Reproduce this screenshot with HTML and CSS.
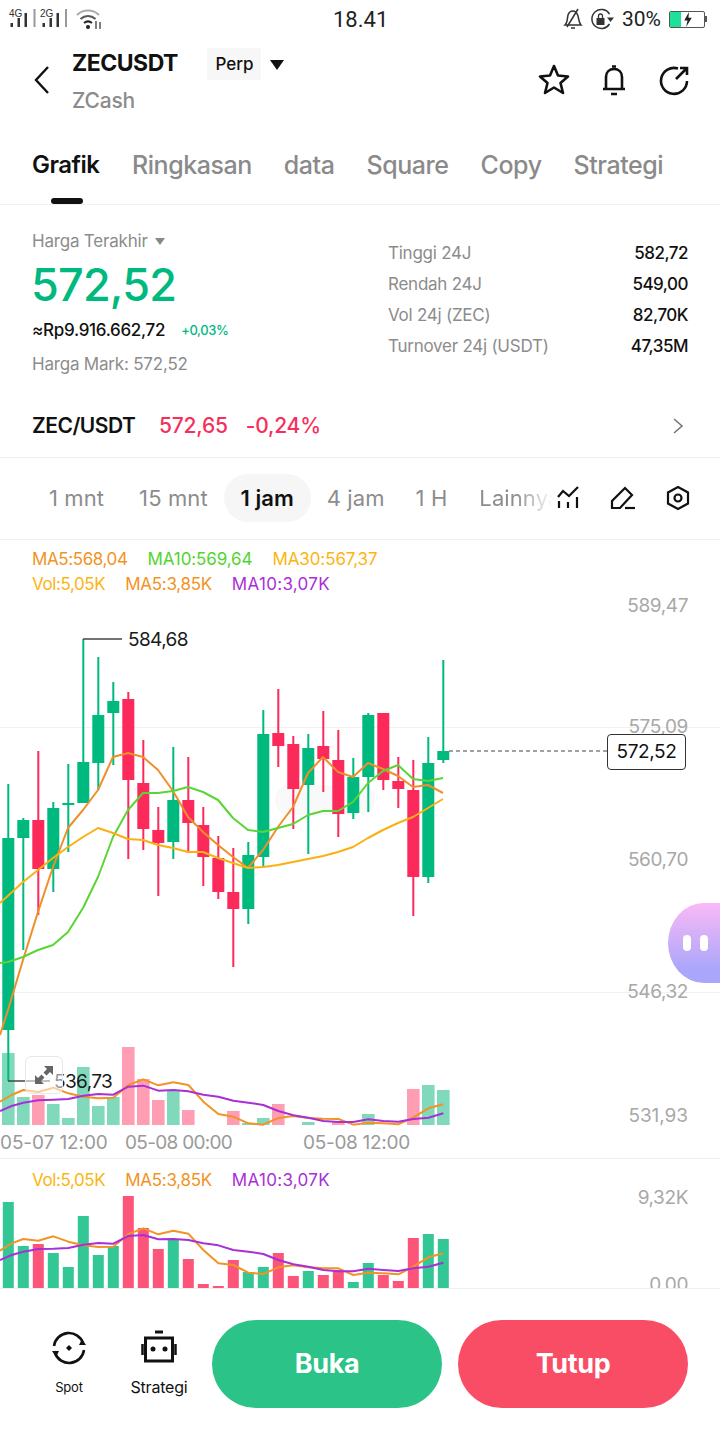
FILE: index.html
```html
<!DOCTYPE html>
<html lang="id">
<head>
<meta charset="utf-8">
<title>ZECUSDT</title>
<link rel="stylesheet" href="styles.css">
</head>
<body>
<div class="app">
  <div class="status">
    <div class="status-left">
      <svg width="72" height="38" viewBox="0 0 72 38">
        <text x="9" y="17" class="sig-t">4G</text>
        <text x="40" y="17" class="sig-t">2G</text>
        <g fill="#333"><rect x="10.500" y="23" width="2.500" height="4"/><rect x="17.500" y="18" width="2.500" height="9"/><rect x="24.500" y="13" width="2.500" height="14"/><rect x="42.500" y="23" width="2.500" height="4"/><rect x="49.500" y="18" width="2.500" height="9"/><rect x="56.500" y="13" width="2.500" height="14"/></g>
        <g fill="#999"><rect x="33.500" y="9" width="2" height="18"/><rect x="65" y="9" width="2" height="18"/></g>
      </svg>
      <svg class="wifi" width="27" height="22" viewBox="0 0 27 22" fill="none"><path d="M1 7C7 1 17 1 23 7" stroke="#aaa" stroke-width="2"/><path d="M4.500 11C9 7 15 7 19.500 11" stroke="#555" stroke-width="2"/><path d="M8 15C10.500 13 13.500 13 16 15" stroke="#222" stroke-width="2"/><circle cx="12" cy="19" r="2" fill="#222"/><path d="M20 21V13M24 21V14" stroke="#555" stroke-width="1.500"/></svg>
    </div>
    <span class="clock">18.41</span>
    <div class="status-right">
      <svg class="s-bell" width="20" height="22" viewBox="0 0 20 22" fill="none" stroke="#333" stroke-width="1.500"><path d="M2 17C5 14 4 11 5 7C6 4 8 3 10 3C13 3 14 5 15 8C16 12 16 15 18 17Z"/><path d="M8 20H12M4 19L15 1"/></svg>
      <svg class="s-lock" width="26" height="22" viewBox="0 0 26 22" fill="none"><path d="M20.500 6A9.500 9.500 0 1 0 20.500 16" stroke="#333" stroke-width="1.500"/><path d="M18 9.500H25L21.500 14Z" fill="#333"/><rect x="7.500" y="10" width="8" height="7" fill="#333"/><path d="M9.500 10V8A2 2 0 0 1 13.500 8V10" stroke="#333" stroke-width="1.300"/></svg>
      <span class="pct">30%</span>
      <span class="battery"><span class="battery-fill"></span><svg class="bolt" width="10" height="15" viewBox="0 0 10 16"><path d="M6 0L1 9H4.500L3 16L9 6H5.500Z" fill="#222"/></svg></span><span class="battery-tip"></span>
    </div>
  </div>

  <div class="head">
    <svg class="back" width="20" height="30" viewBox="0 0 20 30" fill="none"><path d="M16 2L4 15L16 28" stroke="#111" stroke-width="2.400"/></svg>
    <div class="title">
      <div class="title-row">
        <span class="sym">ZECUSDT</span>
        <span class="perp">Perp</span>
        <span class="caret"></span>
      </div>
      <div class="coin">ZCash</div>
    </div>
    <div class="head-icons">
      <svg width="34" height="34" viewBox="0 0 34 34" fill="none" stroke="#111" stroke-width="2.600" stroke-linejoin="round"><path d="M17 3L21 12.500L31 13.500L23.500 20L26 30L17 24.500L8 30L10.500 20L3 13.500L13 12.500Z"/></svg>
      <svg width="34" height="34" viewBox="0 0 34 34" fill="none" stroke="#111" stroke-width="2.600"><path d="M6 26H28M9 26V14C9 9 12.500 6 17 6C21.500 6 25 9 25 14V26"/><path d="M15 3.500H19M14 31H20"/></svg>
      <svg width="34" height="34" viewBox="0 0 34 34" fill="none" stroke="#111" stroke-width="2.600"><path d="M21 5.500A13 13 0 1 0 30 18"/><path d="M19 16L30 5M23 5H30V12"/></svg>
    </div>
  </div>

  <nav class="tabs">
    <span class="tab tab-on">Grafik</span>
    <span class="tab">Ringkasan</span>
    <span class="tab">data</span>
    <span class="tab">Square</span>
    <span class="tab">Copy</span>
    <span class="tab">Strategi</span>
  </nav>

  <section class="price">
    <div class="price-left">
      <div class="last">Harga Terakhir <i class="mini-caret"></i></div>
      <div class="big">572,52</div>
      <div class="rp"><span>≈Rp9.916.662,72</span><em>+0,03%</em></div>
      <div class="mark">Harga Mark: 572,52</div>
    </div>
    <dl class="stats">
      <div><dt>Tinggi 24J</dt><dd>582,72</dd></div>
      <div><dt>Rendah 24J</dt><dd>549,00</dd></div>
      <div><dt>Vol 24j (ZEC)</dt><dd>82,70K</dd></div>
      <div><dt>Turnover 24j (USDT)</dt><dd>47,35M</dd></div>
    </dl>
  </section>

  <div class="spot">
    <b>ZEC/USDT</b>
    <span class="spot-v">572,65</span>
    <span class="spot-p">-0,24%</span>
    <svg class="chev" width="12" height="18" viewBox="0 0 12 18" fill="none"><path d="M2 2L10 9L2 16" stroke="#777" stroke-width="1.600"/></svg>
  </div>

  <div class="ranges">
    <span class="r">1 mnt</span>
    <span class="r r2">15 mnt</span>
    <span class="r r-on">1 jam</span>
    <span class="r r3">4 jam</span>
    <span class="r r4">1 H</span>
    <span class="r r5">Lainnya</span>
    <div class="tools">
      <svg width="26" height="26" viewBox="0 0 26 26" fill="none" stroke="#111" stroke-width="2.200"><path d="M3 12L8 6L14 11L23 2"/><path d="M4 16V23M13 17V23M22 12V23"/></svg>
      <svg width="26" height="26" viewBox="0 0 26 26" fill="none" stroke="#111" stroke-width="2.200"><path d="M2 23V16L15 3L22 10L10 23H2Z"/><path d="M15 23H25"/></svg>
      <svg width="26" height="26" viewBox="0 0 26 26" fill="none" stroke="#111" stroke-width="2.200"><path d="M13 2L23 7.500V18.500L13 24L3 18.500V7.500Z"/><circle cx="13" cy="13" r="3.500"/></svg>
    </div>
  </div>

  <div class="chart">
    <svg id="plot" class="plot" width="720" height="748" viewBox="0 540 720 748"></svg>
    <div class="legend l1"><span class="c-o">MA5:568,04</span><span class="c-g">MA10:569,64</span><span class="c-y">MA30:567,37</span></div>
    <div class="legend l2"><span class="c-y">Vol:5,05K</span><span class="c-o">MA5:3,85K</span><span class="c-p">MA10:3,07K</span></div>
    <div class="legend l3"><span class="c-y">Vol:5,05K</span><span class="c-o">MA5:3,85K</span><span class="c-p">MA10:3,07K</span></div>
    <span class="ax a1">589,47</span>
    <span class="ax a2">575,09</span>
    <span class="ax a3">560,70</span>
    <span class="ax a4">546,32</span>
    <span class="ax a5">531,93</span>
    <span class="ax a6">9,32K</span>
    <span class="ax a7">0,00</span>
    <span class="t t1">05-07 12:00</span>
    <span class="t t2">05-08 00:00</span>
    <span class="t t3">05-08 12:00</span>
    <span class="hi">584,68</span>
    <span class="lo">536,73</span>
    <span class="now">572,52</span>
    <span class="expand"><svg width="22" height="22" viewBox="0 0 22 22" fill="#666"><path d="M11 2H20V11L17 8L13.500 11.500L10.500 8.500L14 5Z"/><path d="M11 20H2V11L5 14L8.500 10.500L11.500 13.500L8 17Z"/></svg></span>
    <span class="bot"><i></i><i></i></span>
  </div>

  <footer class="foot">
    <div class="act act-spot">
      <svg width="36" height="36" viewBox="0 0 36 36" fill="none" stroke="#111" stroke-width="2.600"><path d="M3 16A15 15 0 0 1 32 13M33 20A15 15 0 0 1 4 23"/><path d="M28 15H35L31 9Z M8 21H1L5 27Z" fill="#111" stroke="none"/><path d="M18 15L21 18L18 21L15 18Z" fill="#111" stroke="none"/></svg>
      <span>Spot</span>
    </div>
    <div class="act act-strat">
      <svg width="36" height="36" viewBox="0 0 36 36" fill="none"><path d="M14 2H22" stroke="#111" stroke-width="3"/><rect x="4.500" y="8" width="27" height="23" stroke="#111" stroke-width="3"/><path d="M1.500 14V25M34.500 14V25" stroke="#111" stroke-width="2.500"/><circle cx="12" cy="19" r="2.500" fill="#111"/><circle cx="24" cy="19" r="2.500" fill="#111"/></svg>
      <span>Strategi</span>
    </div>
    <button class="btn buy">Buka</button>
    <button class="btn sell">Tutup</button>
  </footer>
</div>
<script src="chart.js"></script>
</body>
</html>
```
FILE: styles.css
```css
* { box-sizing: border-box; }
html, body { margin: 0; padding: 0; background: #fff; }
body { font-family: Inter, "Liberation Sans", sans-serif; color: #111; }
.app { width: 720px; height: 1440px; overflow: hidden; display: flex; flex-direction: column; background: #fff; font-variant-numeric: tabular-nums; }

.status { height: 38px; display: flex; align-items: center; position: relative; padding: 0 13px 0 0; justify-content: space-between; }
.status-left { display: flex; align-items: center; }
.wifi { margin-left: 4px; }
.sig-t { font: 10px "Liberation Sans", sans-serif; fill: #333; }
.clock { position: absolute; left: 333px; top: 6px; font: 400 22px/28px Roboto, sans-serif; color: #222; }
.status-right { display: flex; align-items: center; }
.s-bell { margin-right: 6px; }
.s-lock { margin-right: 7px; }
.pct { font: 400 21px/28px Roboto, sans-serif; color: #222; margin-right: 8px; }
.battery { width: 36px; height: 17px; border: 1px solid #555; border-radius: 2px; position: relative; display: block; overflow: hidden; }
.battery-fill { position: absolute; left: 0; top: 0; bottom: 0; width: 11px; background: #1fe09a; }
.bolt { position: absolute; left: 13px; top: 0; }
.battery-tip { width: 2px; height: 6px; background: #555; }

.head { height: 88px; display: flex; position: relative; padding-left: 32px; }
.back { margin-top: 27px; }
.title { margin-left: 20px; padding-top: 7px; }
.title-row { display: flex; align-items: center; height: 36px; }
.sym { font: 700 23px/36px Inter, sans-serif; letter-spacing: -0.5px; width: 135px; }
.perp { background: #f7f7f7; width: 54px; height: 32px; border-radius: 3px; text-align: center; font: 500 17px/32px Inter, sans-serif; margin-top: 2px; padding-left: 1px; }
.caret { width: 0; height: 0; border-left: 7px solid transparent; border-right: 7px solid transparent; border-top: 10px solid #111; margin: 3px 0 0 9px; }
.coin { font: 500 21px/28px Inter, sans-serif; color: #8b8b8b; margin-top: 6px; letter-spacing: -0.2px; }
.head-icons { position: absolute; right: 29px; top: 25px; display: flex; gap: 26px; }

.tabs { height: 79px; display: flex; padding: 24px 0 0 32px; border-bottom: 1px solid #f0f0f0; position: relative; gap: 32px; }
.tab { font: 500 25px/30px Inter, sans-serif; color: #8a8a8a; letter-spacing: -0.45px; white-space: nowrap; }
.tab-on { color: #111; font-weight: 600; font-size: 24px; letter-spacing: -0.5px; width: 68px; }
.tab-on::after { content: ""; position: absolute; left: 51px; top: 72px; width: 32px; height: 6px; border-radius: 3px; background: #111; }

.price { height: 196px; display: flex; padding: 0 32px; position: relative; flex: none; }
.price-left { width: 356px; padding-top: 25px; }
.last { font: 400 17px/22px Inter, sans-serif; color: #8c8c8c; letter-spacing: -0.2px; display: flex; align-items: center; gap: 7px; }
.mini-caret { width: 0; height: 0; border-left: 5px solid transparent; border-right: 5px solid transparent; border-top: 7px solid #888; }
.big { font: 500 45px/56px Inter, sans-serif; color: #00b97e; letter-spacing: -0.8px; margin: 5px 0 0 -1px; }
.rp { display: flex; align-items: center; margin-top: 5px; height: 24px; font: 500 17px/24px Inter, sans-serif; letter-spacing: -0.3px; }
.rp em { font: 500 13px/24px Inter, sans-serif; color: #00b97e; margin-left: 16px; letter-spacing: -0.4px; font-style: normal; }
.mark { font: 400 17px/22px Inter, sans-serif; color: #8c8c8c; margin-top: 11px; letter-spacing: -0.2px; }
.stats { margin: 0; padding-top: 32px; flex: 1; display: flex; flex-direction: column; }
.stats div { display: flex; justify-content: space-between; height: 31px; align-items: center; }
.stats dt { font: 400 17px/22px Inter, sans-serif; color: #8c8c8c; letter-spacing: -0.25px; }
.stats dd { margin: 0; font: 500 17px/22px Inter, sans-serif; letter-spacing: -0.5px; }

.spot { height: 58px; display: flex; align-items: center; padding: 0 36px 6px 32px; border-bottom: 1px solid #f0f0f0; margin-top: -1px; flex: none; }
.spot b { font: 600 21px/28px Inter, sans-serif; letter-spacing: -0.5px; width: 127px; }
.spot-v, .spot-p { font: 500 21px/28px Inter, sans-serif; color: #f6305c; letter-spacing: -0.2px; }
.spot-p { margin-left: 18px; }
.chev { margin-left: auto; }

.ranges { height: 82px; position: relative; border-bottom: 1px solid #f0f0f0; display: flex; align-items: center; padding: 0 0 2px 49px; flex: none; }
.r { font: 400 22px/50px Inter, sans-serif; color: #8c8c8c; letter-spacing: 0.1px; white-space: nowrap; }
.r2 { margin-left: 35px; }
.r-on { color: #111; font-weight: 600; background: #f6f6f6; border-radius: 24px; height: 48px; line-height: 48px; width: 87px; text-align: center; margin-left: 16px; }
.r3 { margin-left: 16px; }
.r4 { margin-left: 31px; }
.r5 { margin-left: 32px; width: 74px; overflow: hidden; -webkit-mask-image: linear-gradient(90deg, #000 50%, transparent 100%); mask-image: linear-gradient(90deg, #000 50%, transparent 100%); }
.tools { position: absolute; right: 29px; top: 27px; display: flex; gap: 29px; }

.chart { height: 748px; position: relative; overflow: hidden; flex: none; }
.plot { position: absolute; left: 0; top: 0; display: block; }
.legend { position: absolute; display: flex; font: 400 17px/22px Inter, sans-serif; letter-spacing: -0.4px; white-space: nowrap; }
.l1 { left: 32px; top: 8px; gap: 20px; }
.l2 { left: 32px; top: 33px; gap: 20px; }
.l3 { left: 32px; top: 629px; gap: 20px; }
.c-o { color: #f29325; }
.c-g { color: #52d42f; }
.c-y { color: #fbb511; }
.c-p { color: #a92fd6; letter-spacing: 0.3px; }
.l1 .c-g, .l1 .c-y { letter-spacing: -0.1px; }
.l2 .c-o, .l3 .c-o { letter-spacing: -0.3px; }
.ax { position: absolute; right: 32px; font: 400 19px/24px Inter, sans-serif; color: #a8a8a8; letter-spacing: -0.4px; }
.a1 { top: 54px; }
.a2 { top: 175px; }
.a3 { top: 308px; }
.a4 { top: 440px; }
.a5 { top: 564px; letter-spacing: -0.05px; }
.a6 { top: 646px; }
.a7 { top: 733px; }
.t { position: absolute; top: 591px; font: 400 19px/24px Inter, sans-serif; color: #9a9a9a; white-space: nowrap; }
.t1 { left: 0; letter-spacing: -0.1px; }
.t2 { left: 125px; letter-spacing: -0.7px; }
.t3 { left: 303px; letter-spacing: -0.3px; }
.hi, .lo { position: absolute; font: 400 19px/24px Inter, sans-serif; color: #1a1a1a; letter-spacing: -0.6px; }
.hi { left: 128px; top: 88px; }
.lo { left: 54px; top: 530px; }
.now { position: absolute; left: 607px; top: 194px; width: 79px; height: 36px; border: 1px solid #333; border-radius: 4px; background: #fff; font: 400 19px/34px Inter, sans-serif; letter-spacing: -0.4px; text-align: center; }
.expand { position: absolute; left: 25px; top: 516px; width: 38px; height: 38px; border: 1px solid #e8e8e8; border-radius: 6px; background: rgba(255,255,255,.55); display: flex; align-items: center; justify-content: center; }
.bot { position: absolute; left: 668px; top: 363px; width: 60px; height: 80px; border-radius: 36px 0 0 36px / 40px 0 0 40px; background: linear-gradient(180deg, #f9b9f6 0%, #a9a6fb 85%); display: flex; align-items: center; padding-left: 15px; gap: 9px; }
.bot i { width: 8px; height: 16px; border-radius: 4px; background: #fff; }

.foot { flex: 1; border-top: 1px solid #f0f0f0; position: relative; background: #fff; z-index: 2; }
.act { position: absolute; top: 41px; display: flex; flex-direction: column; align-items: center; font: 400 16px/20px Inter, sans-serif; width: 70px; }
.act span { margin-top: 11px; letter-spacing: -0.2px; }
.act-spot { left: 34px; }
.act-spot span { font-size: 13px; }
.act-strat { left: 124px; }
.btn { border: 0; height: 88px; width: 230px; border-radius: 44px; color: #fff; font: 700 27px/88px Inter, sans-serif; letter-spacing: -0.4px; padding: 0; position: absolute; top: 31px; }
.buy { left: 212px; background: #2cc388; }
.sell { left: 458px; background: #f84d64; }
```
FILE: chart.js
```js
var NS = 'http://www.w3.org/2000/svg';
var svg = document.getElementById('plot');
var G = '#00b97e', R = '#fb2a5a';
function x(i) { return 8.3 + 15 * i; }
function add(tag, a) {
  var e = document.createElementNS(NS, tag);
  for (var k in a) e.setAttribute(k, a[k]);
  svg.appendChild(e);
  return e;
}
function line(pts, color, w) {
  var d = 'M' + pts.map(function (p) { return p[0] + ' ' + p[1]; }).join('L');
  add('path', { d: d, fill: 'none', stroke: color, 'stroke-width': w || 2, 'stroke-linejoin': 'round' });
}
// grid
[727, 992, 1158].forEach(function (y) { add('rect', { x: 0, y: y, width: 720, height: 1, fill: '#f1f1f1' }); });

// faint watermark
add('rect', { x: 275, y: 785, width: 100, height: 30, rx: 14, fill: '#f9f9f9' });

// volume: lower pane top, up flag; the upper pane is the same series sitting lower
var vol = [[1202,1],[1246,1],[1244,0],[1253,1],[1267,1],[1216,1],[1255,1],[1246,1],[1196,0],[1228,0],[1249,0],[1240,1],[1259,0],[1284,0],[1286,0],[1260,0],[1272,1],[1267,1],[1253,0],[1276,0],[1271,1],[1275,0],[1270,0],[1282,1],[1263,1],[1275,0],[1281,0],[1238,0],[1234,1],[1239,1]];
vol.forEach(function (v, i) {
  var h = 1288 - v[0];
  add('rect', { x: x(i) - 5.5, y: v[0], width: 11, height: h, fill: v[1] ? '#33c795' : '#fd5479' });
  var uh = h - 14;
  if (uh > 0) add('rect', { x: x(i) - 6.3, y: 1125 - uh, width: 12.6, height: uh, fill: v[1] ? '#7fd9ba' : '#ff9db3' });
});
function scaled(a, off) { return a.map(function (p) { return [p[0] / 3, off + p[1] / 3]; }); }
var xs = [0,35,70,115,160,205,250,295,340,385,430,475,520,565,610,655,700,745,790,835,880,925,970,1015,1060,1105,1150,1195,1240,1285,1330];
function zip(ys) { return ys.map(function (y, i) { return [xs[i], y]; }); }
var u5 = [215,195,180,186,173,190,200,205,203,165,148,166,157,165,215,252,260,280,284,264,258,264,266,267,284,278,280,283,262,235,223];
var u10 = [243,228,218,211,209,207,197,192,194,170,167,182,180,184,194,200,212,218,225,243,256,263,273,276,276,268,273,275,267,263,250];
var d5 = [272,250,237,242,229,245,256,261,260,222,205,223,212,221,270,310,315,338,342,322,316,322,325,325,345,338,340,343,320,292,280];
var d10 = [300,285,275,267,266,264,254,249,251,228,225,238,237,240,250,256,270,275,282,300,313,320,330,334,334,326,330,333,325,320,308];
line(scaled(zip(u5), 1030), '#f29325');
line(scaled(zip(u10), 1030), '#a92fd6');
line(scaled(zip(d5), 1160), '#f29325');
line(scaled(zip(d10), 1160), '#a92fd6');

// candles: wickTop, bodyTop, bodyBottom, wickBottom, up
var c = [[784,838,1030,1081,1],[818,820,838,950,1],[751,820,869,915,0],[802,808,869,892,1],[764,803,805,852,1],[639,762,803,803,1],[657,715,763,790,1],[682,701,713,765,1],[692,699,780,859,0],[740,783,829,850,0],[807,830,843,896,0],[747,800,842,859,1],[757,800,823,853,0],[807,825,857,886,0],[836,858,892,899,0],[848,892,909,967,0],[842,855,909,924,1],[710,734,857,867,1],[689,733,746,767,0],[736,744,789,829,0],[734,748,785,854,1],[711,746,759,792,0],[730,760,814,837,0],[758,777,813,819,1],[713,715,777,812,1],[713,713,780,790,0],[757,781,789,808,0],[760,790,877,916,0],[737,763,877,883,1],[660,751,760,763,1]];
c.forEach(function (k, i) {
  var col = k[4] ? G : R;
  add('rect', { x: x(i) - 1, y: k[0], width: 2, height: k[3] - k[0], fill: col });
  add('rect', { x: x(i) - 6, y: k[1], width: 12, height: k[2] - k[1], fill: col });
});

// moving averages
line([[0,1035],[8,1010],[23,960],[38,912],[53,867],[68,828],[83,810],[98,790],[113,757],[128,753],[143,757],[158,770],[173,791],[188,817],[203,832],[218,845],[233,857],[248,868],[263,850],[278,827],[293,807],[308,773],[323,757],[338,772],[353,777],[368,763],[383,769],[398,776],[413,787],[428,785],[443,793]], '#ef8f2b');
line([[0,963],[8,962],[23,957],[38,950],[53,945],[68,932],[83,908],[98,877],[113,837],[128,810],[143,793],[158,793],[173,791],[188,787],[203,792],[218,800],[233,818],[248,830],[263,832],[278,828],[293,824],[308,815],[323,811],[338,811],[353,802],[368,783],[383,771],[398,765],[413,779],[428,781],[443,778]], '#5ad537');
line([[0,903],[23,882],[38,870],[53,858],[68,847],[83,837],[98,828],[113,833],[128,839],[143,840],[158,845],[173,848],[188,852],[203,852],[218,858],[233,863],[248,868],[263,867],[278,865],[293,862],[308,859],[323,856],[338,852],[353,847],[368,838],[383,830],[398,823],[413,817],[428,808],[443,799]], '#fbb012');

// markers
line([[83,639],[122,639]], '#444', 1.5);
line([[8,1081],[50,1081]], '#444', 1.5);
add('path', { d: 'M449 751H607', stroke: '#444', 'stroke-width': 1, 'stroke-dasharray': '4 3', fill: 'none' });
```
